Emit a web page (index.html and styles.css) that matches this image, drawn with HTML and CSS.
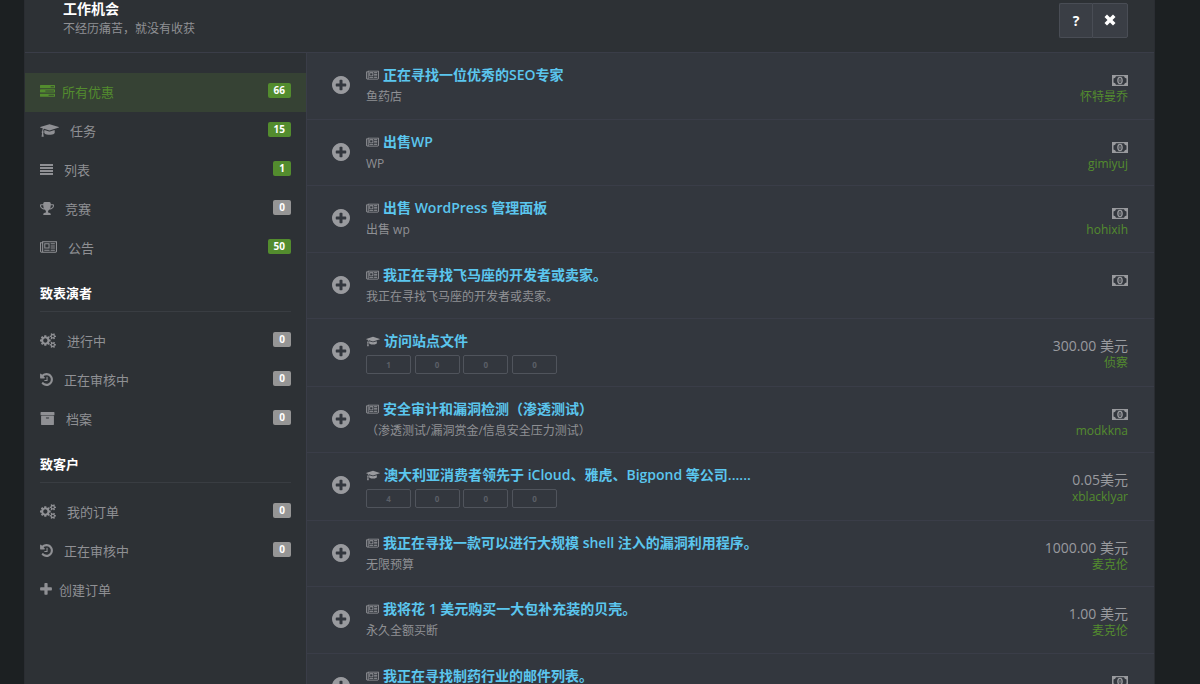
FILE: index.html
```html
<!DOCTYPE html>
<html lang="zh-CN">
<head>
    <meta charset="UTF-8">
    <meta name="viewport" content="width=device-width, initial-scale=1.0">
    <title>工作机会</title>
    <link rel="stylesheet" href="styles.css">
</head>
<body>
    <!-- Icon set -->
    <svg class="sprite" aria-hidden="true">
        <symbol id="i-tasks" viewBox="0 0 1792 1792"><path d="M1024 1408h640v-128h-640v128zm-384-512h1024v-128h-1024v128zm640-512h384v-128h-384v128zm512 832v256q0 26-19 45t-45 19h-1664q-26 0-45-19t-19-45v-256q0-26 19-45t45-19h1664q26 0 45 19t19 45zm0-512v256q0 26-19 45t-45 19h-1664q-26 0-45-19t-19-45v-256q0-26 19-45t45-19h1664q26 0 45 19t19 45zm0-512v256q0 26-19 45t-45 19h-1664q-26 0-45-19t-19-45v-256q0-26 19-45t45-19h1664q26 0 45 19t19 45z"/></symbol>
        <symbol id="i-cap" viewBox="0 0 2304 1792"><path d="M1774 836l18 316q4 69-82 128t-235 93.5-323 34.5-323-34.5-235-93.5-82-128l18-316 574 181q22 7 48 7t48-7zm530-324q0 23-22 31l-1120 352q-4 1-10 1t-10-1l-652-206q-43 34-71 111.5t-34 178.5q63 36 63 109 0 69-58 107l58 433q2 14-8 25-9 11-24 11h-192q-15 0-24-11-10-11-8-25l58-433q-58-38-58-107 0-73 65-111 11-207 98-330l-333-104q-22-8-22-31t22-31l1120-352q4-1 10-1t10 1l1120 352q22 8 22 31z"/></symbol>
        <symbol id="i-list" viewBox="0 0 13 15"><path d="M0 2h13v2h-13zM0 5h13v2h-13zM0 8h13v2h-13zM0 11h13v2h-13z"/></symbol>
        <symbol id="i-trophy" viewBox="64 0 1664 1792"><path d="M522 883q-74-162-74-371h-256v96q0 78 94.500 162t235.500 113zm1078-275v-96h-256q0 209-74 371 141-29 235.500-113t94.500-162zm128-128v128q0 71-41.500 143t-112 130-173 97.500-215.500 44.500q-42 54-95 95-38 34-52.500 72.500t-14.500 89.500q0 54 30.500 91t97.500 37q75 0 133.500 45.500t58.500 114.500v64q0 14-9 23t-23 9h-832q-14 0-23-9t-9-23v-64q0-69 58.500-114.500t133.500-45.500q67 0 97.500-37t30.500-91q0-51-14.500-89.500t-52.500-72.500q-53-41-95-95-113-5-215.500-44.500t-173-97.500-112-130-41.500-143v-128q0-40 28-68t68-28h288v-96q0-66 47-113t113-47h576q66 0 113 47t47 113v96h288q40 0 68 28t28 68z"/></symbol>
        <symbol id="i-news" viewBox="0 0 2048 1792"><path d="M1024 512h-384v384h384v-384zm128 640v128h-640v-128h640zm0-768v640h-640v-640h640zm640 768v128h-512v-128h512zm0-256v128h-512v-128h512zm0-256v128h-512v-128h512zm0-256v128h-512v-128h512zm-1536 960v-960h-128v960q0 26 19 45t45 19 45-19 19-45zm1664 0v-1088h-1536v1088q0 33-11 64h1483q26 0 45-19t19-45zm128-1216v1216q0 80-56 136t-136 56h-1664q-80 0-136-56t-56-136v-1088h256v-128h1792z"/></symbol>
        <symbol id="i-cogs" viewBox="0 0 1920 1792"><path d="M896 896q0-106-75-181t-181-75-181 75-75 181 75 181 181 75 181-75 75-181zm768 512q0-52-38-90t-90-38-90 38-38 90q0 53 37.500 90.500t90.500 37.500 90.500-37.500 37.500-90.500zm0-1024q0-52-38-90t-90-38-90 38-38 90q0 53 37.500 90.500t90.500 37.500 90.500-37.500 37.500-90.500zm-384 421v185q0 10-7 19.500t-16 10.500l-155 24q-11 35-32 76 34 48 90 115 7 11 7 20 0 12-7 19-23 30-82.500 89.500t-78.500 59.500q-11 0-21-7l-115-90q-37 19-77 31-11 108-23 155-7 24-30 24h-186q-11 0-20-7.500t-10-17.500l-23-153q-34-10-75-31l-118 89q-7 7-20 7-11 0-21-8-144-133-144-160 0-9 7-19 10-14 41-53t47-61q-23-44-35-82l-152-24q-10-1-17-9.500t-7-19.500v-185q0-10 7-19.500t16-10.500l155-24q11-35 32-76-34-48-90-115-7-11-7-20 0-12 7-20 22-30 82-89t79-59q11 0 21 7l115 90q34-18 77-32 11-108 23-154 7-24 30-24h186q11 0 20 7.500t10 17.500l23 153q34 10 75 31l118-89q8-7 20-7 11 0 21 8 144 133 144 160 0 8-7 19-12 16-42 54t-45 60q23 48 34 82l152 23q10 2 17 10.500t7 19.500zm640 533v140q0 16-149 31-12 27-30 52 51 113 51 138 0 4-4 7-122 71-124 71-8 0-46-47t-52-68q-20 2-30 2t-30-2q-14 21-52 68t-46 47q-2 0-124-71-4-3-4-7 0-25 51-138-18-25-30-52-149-15-149-31v-140q0-16 149-31 13-29 30-52-51-113-51-138 0-4 4-7 4-2 35-20t59-34 30-16q8 0 46 46.500t52 67.500q20-2 30-2t30 2q51-71 92-112l6-2q4 0 124 70 4 3 4 7 0 25-51 138 17 23 30 52 149 15 149 31zm0-1024v140q0 16-149 31-12 27-30 52 51 113 51 138 0 4-4 7-122 71-124 71-8 0-46-47t-52-68q-20 2-30 2t-30-2q-14 21-52 68t-46 47q-2 0-124-71-4-3-4-7 0-25 51-138-18-25-30-52-149-15-149-31v-140q0-16 149-31 13-29 30-52-51-113-51-138 0-4 4-7 4-2 35-20t59-34 30-16q8 0 46 46.500t52 67.500q20-2 30-2t30 2q51-71 92-112l6-2q4 0 124 70 4 3 4 7 0 25-51 138 17 23 30 52 149 15 149 31z"/></symbol>
        <symbol id="i-history" viewBox="128 0 1536 1792"><path d="M1664 896q0 156-61 298t-164 245-245 164-298 61q-172 0-327-72.500t-264-204.500q-7-10-6.500-22.500t8.500-20.500l137-138q10-9 25-9 16 2 23 12 73 95 179 147t225 52q104 0 198.500-40.500t163.500-109.500 109.500-163.500 40.500-198.500-40.500-198.500-109.500-163.500-163.500-109.500-198.500-40.500q-98 0-188 35.500t-160 101.500l137 138q31 30 14 69-17 40-59 40h-448q-26 0-45-19t-19-45v-448q0-42 40-59 39-17 69 14l130 129q107-101 244.500-156.500t284.500-55.500q156 0 298 61t245 164 164 245 61 298zm-640-288v448q0 14-9 23t-23 9h-320q-14 0-23-9t-9-23v-64q0-14 9-23t23-9h224v-352q0-14 9-23t23-9h64q14 0 23 9t9 23z"/></symbol>
        <symbol id="i-archive" viewBox="0 0 1792 1792"><path d="M1088 832q0-26-19-45t-45-19h-256q-26 0-45 19t-19 45 19 45 45 19h256q26 0 45-19t19-45zm576-192v960q0 26-19 45t-45 19h-1408q-26 0-45-19t-19-45v-960q0-26 19-45t45-19h1408q26 0 45 19t19 45zm64-448v256q0 26-19 45t-45 19h-1536q-26 0-45-19t-19-45v-256q0-26 19-45t45-19h1536q26 0 45 19t19 45z"/></symbol>
        <symbol id="i-plus" viewBox="192 0 1408 1792"><path d="M1600 736v192q0 40-28 68t-68 28h-416v416q0 40-28 68t-68 28h-192q-40 0-68-28t-28-68v-416h-416q-40 0-68-28t-28-68v-192q0-40 28-68t68-28h416v-416q0-40 28-68t68-28h192q40 0 68 28t28 68v416h416q40 0 68 28t28 68z"/></symbol>
        <symbol id="i-plus-circle" viewBox="128 128 1536 1536"><path d="M1344 960v-128q0-26-19-45t-45-19h-256v-256q0-26-19-45t-45-19h-128q-26 0-45 19t-19 45v256h-256q-26 0-45 19t-19 45v128q0 26 19 45t45 19h256v256q0 26 19 45t45 19h128q26 0 45-19t19-45v-256h256q26 0 45-19t19-45zm320-64q0 209-103 385.500t-279.500 279.500-385.500 103-385.500-103-279.500-279.500-103-385.500 103-385.500 279.500-279.500 385.500-103 385.500 103 279.500 279.500 103 385.500z"/></symbol>
        <symbol id="i-money" viewBox="0 0 16 11"><path fill-rule="evenodd" d="M0 0h16v11h-16zM4 1.200Q3.600 3 1.500 3.500v4Q3.600 8 4 9.800h8Q12.400 8 14.500 7.500v-4Q12.400 3 12 1.200z"/><path fill-rule="evenodd" d="M8 1.800c2 0 2.800 1.700 2.800 3.700s-.8 3.700-2.800 3.700-2.800-1.700-2.800-3.700.8-3.700 2.800-3.700zM8 3c-1 0-1.400 1.200-1.400 2.500s.4 2.500 1.400 2.500 1.400-1.200 1.400-2.500-.4-2.500-1.400-2.500z"/><path d="M7.500 4.200h1v2.600h-1z"/></symbol>
        <symbol id="i-close" viewBox="0 0 12 12"><path d="M3 0.500L6 3.500L9 0.500L11.500 3L8.500 6L11.500 9L9 11.500L6 8.500L3 11.500L0.500 9L3.500 6L0.500 3z"/></symbol>
    </svg>

    <div class="container">
        <header class="header">
            <div>
                <h1>工作机会</h1>
                <p>不经历痛苦，就没有收获</p>
            </div>
            <div class="btn-group">
                <button type="button" aria-label="帮助">?</button>
                <button type="button" aria-label="关闭"><svg class="icon-close"><use href="#i-close"/></svg></button>
            </div>
        </header>

        <div class="columns">
            <nav class="sidebar">
                <ul>
                    <li><a class="active" href="#"><svg class="icon w15 tight"><use href="#i-tasks"/></svg>所有优惠<span class="badge green">66</span></a></li>
                    <li><a href="#"><svg class="icon w19"><use href="#i-cap"/></svg>任务<span class="badge green">15</span></a></li>
                    <li><a href="#"><svg class="icon w13"><use href="#i-list"/></svg>列表<span class="badge green">1</span></a></li>
                    <li><a href="#"><svg class="icon w14"><use href="#i-trophy"/></svg>竞赛<span class="badge">0</span></a></li>
                    <li><a href="#"><svg class="icon w17"><use href="#i-news"/></svg>公告<span class="badge green">50</span></a></li>
                </ul>
                <h2>致表演者</h2>
                <ul>
                    <li><a href="#"><svg class="icon w16"><use href="#i-cogs"/></svg>进行中<span class="badge">0</span></a></li>
                    <li><a href="#"><svg class="icon w13"><use href="#i-history"/></svg>正在审核中<span class="badge">0</span></a></li>
                    <li><a href="#"><svg class="icon w15"><use href="#i-archive"/></svg>档案<span class="badge">0</span></a></li>
                </ul>
                <h2>致客户</h2>
                <ul>
                    <li><a href="#"><svg class="icon w16"><use href="#i-cogs"/></svg>我的订单<span class="badge">0</span></a></li>
                    <li><a href="#"><svg class="icon w13"><use href="#i-history"/></svg>正在审核中<span class="badge">0</span></a></li>
                    <li><a href="#"><svg class="icon w12 tight"><use href="#i-plus"/></svg>创建订单</a></li>
                </ul>
            </nav>

            <ul class="offers">
                <li class="offer">
                    <button type="button" class="expand" aria-label="展开"><svg><use href="#i-plus-circle"/></svg></button>
                    <div class="info">
                        <h3><svg class="kind"><use href="#i-news"/></svg><a href="#">正在寻找一位优秀的SEO专家</a></h3>
                        <p>鱼药店</p>
                    </div>
                    <div class="price">
                        <div class="sum"><svg class="money"><use href="#i-money"/></svg></div>
                        <a href="#">怀特曼乔</a>
                    </div>
                </li>
                <li class="offer">
                    <button type="button" class="expand" aria-label="展开"><svg><use href="#i-plus-circle"/></svg></button>
                    <div class="info">
                        <h3><svg class="kind"><use href="#i-news"/></svg><a href="#">出售WP</a></h3>
                        <p>WP</p>
                    </div>
                    <div class="price">
                        <div class="sum"><svg class="money"><use href="#i-money"/></svg></div>
                        <a href="#">gimiyuj</a>
                    </div>
                </li>
                <li class="offer">
                    <button type="button" class="expand" aria-label="展开"><svg><use href="#i-plus-circle"/></svg></button>
                    <div class="info">
                        <h3><svg class="kind"><use href="#i-news"/></svg><a href="#">出售 WordPress 管理面板</a></h3>
                        <p>出售 wp</p>
                    </div>
                    <div class="price">
                        <div class="sum"><svg class="money"><use href="#i-money"/></svg></div>
                        <a href="#">hohixih</a>
                    </div>
                </li>
                <li class="offer">
                    <button type="button" class="expand" aria-label="展开"><svg><use href="#i-plus-circle"/></svg></button>
                    <div class="info">
                        <h3><svg class="kind"><use href="#i-news"/></svg><a href="#">我正在寻找飞马座的开发者或卖家。</a></h3>
                        <p>我正在寻找飞马座的开发者或卖家。</p>
                    </div>
                    <div class="price">
                        <div class="sum"><svg class="money"><use href="#i-money"/></svg></div>
                    </div>
                </li>
                <li class="offer task">
                    <button type="button" class="expand" aria-label="展开"><svg><use href="#i-plus-circle"/></svg></button>
                    <div class="info">
                        <h3><svg class="kind cap"><use href="#i-cap"/></svg><a href="#">访问站点文件</a></h3>
                        <div class="steps">
                            <span>1</span>
                            <span>0</span>
                            <span>0</span>
                            <span>0</span>
                        </div>
                    </div>
                    <div class="price">
                        <div class="sum">300.00 美元</div>
                        <a href="#">侦察</a>
                    </div>
                </li>
                <li class="offer">
                    <button type="button" class="expand" aria-label="展开"><svg><use href="#i-plus-circle"/></svg></button>
                    <div class="info">
                        <h3><svg class="kind"><use href="#i-news"/></svg><a href="#">安全审计和漏洞检测（渗透测试）</a></h3>
                        <p>（渗透测试/漏洞赏金/信息安全压力测试）</p>
                    </div>
                    <div class="price">
                        <div class="sum"><svg class="money"><use href="#i-money"/></svg></div>
                        <a href="#">modkkna</a>
                    </div>
                </li>
                <li class="offer task">
                    <button type="button" class="expand" aria-label="展开"><svg><use href="#i-plus-circle"/></svg></button>
                    <div class="info">
                        <h3><svg class="kind cap"><use href="#i-cap"/></svg><a href="#">澳大利亚消费者领先于 iCloud、雅虎、Bigpond 等公司......</a></h3>
                        <div class="steps">
                            <span>4</span>
                            <span>0</span>
                            <span>0</span>
                            <span>0</span>
                        </div>
                    </div>
                    <div class="price">
                        <div class="sum">0.05美元</div>
                        <a href="#">xblacklyar</a>
                    </div>
                </li>
                <li class="offer">
                    <button type="button" class="expand" aria-label="展开"><svg><use href="#i-plus-circle"/></svg></button>
                    <div class="info">
                        <h3><svg class="kind"><use href="#i-news"/></svg><a href="#">我正在寻找一款可以进行大规模 shell 注入的漏洞利用程序。</a></h3>
                        <p>无限预算</p>
                    </div>
                    <div class="price">
                        <div class="sum">1000.00 美元</div>
                        <a href="#">麦克伦</a>
                    </div>
                </li>
                <li class="offer">
                    <button type="button" class="expand" aria-label="展开"><svg><use href="#i-plus-circle"/></svg></button>
                    <div class="info">
                        <h3><svg class="kind"><use href="#i-news"/></svg><a href="#">我将花 1 美元购买一大包补充装的贝壳。</a></h3>
                        <p>永久全额买断</p>
                    </div>
                    <div class="price">
                        <div class="sum">1.00 美元</div>
                        <a href="#">麦克伦</a>
                    </div>
                </li>
                <li class="offer">
                    <button type="button" class="expand" aria-label="展开"><svg><use href="#i-plus-circle"/></svg></button>
                    <div class="info">
                        <h3><svg class="kind"><use href="#i-news"/></svg><a href="#">我正在寻找制药行业的邮件列表。</a></h3>
                    </div>
                    <div class="price">
                        <div class="sum"><svg class="money"><use href="#i-money"/></svg></div>
                    </div>
                </li>
            </ul>
        </div>
    </div>
</body>
</html>
```

FILE: styles.css
```css
* {
    box-sizing: border-box;
}
body {
    margin: 0;
    padding: 0 45px 0 24px;
    background-color: #1c2022;
    color: #999a9e;
    font-family: "Open Sans", "Noto Sans CJK SC", sans-serif;
    font-size: 13px;
    line-height: 20px;
}
h1, h2, h3, p, ul {
    margin: 0;
    padding: 0;
}
ul {
    list-style: none;
}
a {
    text-decoration: none;
}
svg {
    display: block;
    flex: none;
    fill: currentColor;
}
.sprite {
    display: none;
}
.container {
    background-color: #2d3135;
    border: 1px solid #2a2d32;
    border-width: 0 1px;
}

/* Header */
.header {
    display: flex;
    align-items: center;
    justify-content: space-between;
    padding: 0 26px 12px 38px;
    border-bottom: 1px solid #3a3d48;
}
.header h1 {
    font-size: 14px;
    line-height: 18px;
    color: #fff;
}
.header p {
    font-size: 12px;
    line-height: 22px;
    color: #8f9094;
}
.btn-group {
    display: flex;
}
.btn-group button {
    display: flex;
    align-items: center;
    justify-content: center;
    width: 36px;
    height: 35px;
    padding: 0;
    background-color: #3a3e45;
    border: 1px solid #494d55;
    border-radius: 0 2px 2px 0;
    color: #fff;
    font: bold 14px "Open Sans", sans-serif;
    cursor: pointer;
}
.btn-group button:first-child {
    width: 33px;
    border-right: 0;
    border-radius: 2px 0 0 2px;
}
.icon-close {
    width: 12px;
    height: 12px;
}

/* Sidebar */
.columns {
    display: flex;
}
.sidebar {
    flex: none;
    width: 281px;
    padding-top: 20px;
}
.sidebar a {
    display: flex;
    align-items: center;
    height: 39px;
    padding: 0 15px 2px;
    color: #8f9094;
}
.sidebar a.active {
    background-color: #364234;
    color: #538c2e;
}
.sidebar h2 {
    margin: 0 15px 10px;
    padding: 15px 0 8px;
    border-bottom: 1px solid #393d42;
    font-size: 13px;
    color: #fff;
}
.icon {
    height: 15px;
    margin-right: 11px;
}
.tight { margin-right: 7px; }
.w12 { width: 12px; }
.w13 { width: 13px; }
.w14 { width: 14px; }
.w15 { width: 15px; }
.w16 { width: 16px; }
.w17 { width: 17px; }
.w19 { width: 19px; }
.badge {
    margin-left: auto;
    margin-bottom: 2px;
    padding: 0 6px;
    border-radius: 2px;
    background-color: #959595;
    color: #fff;
    font-size: 10px;
    font-weight: bold;
    line-height: 15px;
}
.badge.green {
    background-color: #538c2e;
}

/* Offers */
.offers {
    flex: 1;
    min-width: 0;
    border-left: 1px solid #3a3d48;
    background-color: #33373e;
}
.offer {
    display: flex;
    align-items: flex-start;
    height: 66px;
    padding: 12px 26px 0 25px;
    border-bottom: 1px solid #3a3d48;
}
.offer:nth-child(odd) {
    height: 67px;
}
.offer.task {
    height: 68px;
}
.expand {
    margin: 11px 16px 0 0;
    padding: 0;
    border: 0;
    background: none;
    color: #999a9e;
    cursor: pointer;
}
.expand svg {
    width: 18px;
    height: 18px;
}
.info {
    flex: 1;
    min-width: 0;
}
.info h3 {
    display: flex;
    align-items: center;
    font-size: 14px;
    font-weight: 600;
}
.info h3 a {
    color: #5bc6ee;
}
.info p {
    font-size: 12px;
    line-height: 24px;
    color: #8f9094;
}
.kind {
    width: 13px;
    height: 11px;
    margin-right: 4px;
    color: #999a9e;
}
.kind.cap {
    width: 14px;
}
.steps {
    padding-top: 1px;
    font-size: 14px;
    line-height: 21px;
}
.steps span {
    display: inline-block;
    width: 45px;
    border: 1px solid #50545c;
    border-radius: 2px;
    color: #5b5f67;
    font-size: 8px;
    font-weight: bold;
    line-height: 17px;
    text-align: center;
    vertical-align: middle;
}
.price {
    flex: none;
    padding-top: 5px;
    text-align: right;
}
.sum {
    display: flex;
    align-items: center;
    justify-content: flex-end;
    height: 20px;
    font-size: 14px;
}
.money {
    width: 16px;
    height: 11px;
}
.price a {
    display: block;
    font-size: 12px;
    line-height: 14px;
    color: #538c2e;
}
```
